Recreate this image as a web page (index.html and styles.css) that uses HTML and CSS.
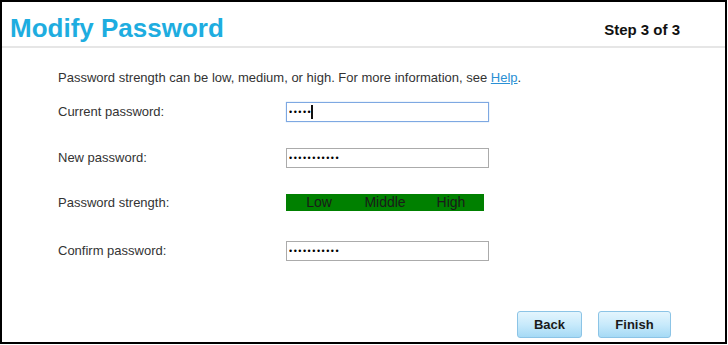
FILE: index.html
```html
<!DOCTYPE html>
<html lang="en">

<head>
    <title>Modify Password</title>
    <link rel="stylesheet" href="styles.css">
</head>

<body>
    <div class="wizard">
        <div class="wizard-header">
            <h1 class="wizard-title">Modify Password</h1>
            <span class="wizard-step">Step 3 of 3</span>
        </div>

        <div class="wizard-body">
            <p class="intro">Password strength can be low, medium, or high. For more information, see <a href="#">Help</a>.</p>

            <div class="form-grid">
                <label class="form-label" for="current">Current password:</label>
                <span class="field is-focused">
                    <input type="password" id="current" class="pwd" value="12345">
                </span>

                <label class="form-label" for="new">New password:</label>
                <span class="field">
                    <input type="password" id="new" class="pwd" value="12345678901">
                </span>

                <span class="form-label">Password strength:</span>
                <div class="strength">
                    <span>Low</span>
                    <span>Middle</span>
                    <span>High</span>
                </div>

                <label class="form-label" for="confirm">Confirm password:</label>
                <span class="field">
                    <input type="password" id="confirm" class="pwd" value="12345678901">
                </span>
            </div>
        </div>

        <div class="wizard-footer">
            <button class="btn btn-back">Back</button>
            <button class="btn btn-finish">Finish</button>
        </div>
    </div>
</body>

</html>
```

FILE: styles.css
```css
body,
html {
    margin: 0;
    padding: 0;
    background-color: white;
    font-family: 'Liberation Sans', Arial, sans-serif;
}

.wizard {
    width: 727px;
    height: 344px;
    box-sizing: border-box;
    border: 2px solid #000;
    display: flex;
    flex-direction: column;
}

.wizard-header {
    height: 44px;
    display: flex;
    align-items: flex-end;
    justify-content: space-between;
    padding: 0 45px 0 8px;
    border-bottom: 2px solid #e6e6e6;
}

.wizard-title {
    margin: 0 0 3px 0;
    font-size: 26px;
    font-weight: bold;
    color: #1eade0;
    line-height: 30px;
}

.wizard-step {
    font-size: 15px;
    font-weight: bold;
    color: #111;
    margin-bottom: 8px;
}

.wizard-body {
    padding: 0 0 0 56px;
    color: #333;
    font-size: 13px;
}

.intro {
    margin: 22px 0 0 0;
    line-height: 15px;
}

.intro a {
    color: #2a8fd4;
}

.form-grid {
    display: grid;
    grid-template-columns: 228px 203px;
    grid-template-rows: 47px 45px 44px 53px;
    align-items: center;
    margin-top: 3px;
}

.field {
    position: relative;
    display: block;
}

.pwd {
    width: 100%;
    height: 20px;
    box-sizing: border-box;
    border: 1px solid #ababab;
    padding: 0 0 0 2px;
    font-family: 'Liberation Sans', Arial, sans-serif;
    font-size: 9px;
    letter-spacing: 1.5px;
    color: #000;
    outline: none;
}

.is-focused .pwd {
    border-color: #7ea8e2;
    box-shadow: 0 0 1px #9cc0ee;
}

/* fake caret, the screenshot has the first field focused */
.is-focused::after {
    content: "";
    position: absolute;
    left: 25px;
    top: 3px;
    width: 2px;
    height: 14px;
    background-color: #111;
}

.strength {
    width: 198px;
    height: 17px;
    background-color: #008000;
    display: grid;
    grid-template-columns: 1fr 1fr 1fr;
    align-items: center;
    text-align: center;
    color: #1a1a1a;
    font-size: 14px;
    line-height: 17px;
}

.wizard-footer {
    margin-top: auto;
    display: flex;
    justify-content: flex-end;
    gap: 16px;
    padding: 0 54px 4px 0;
}

.btn {
    height: 27px;
    box-sizing: border-box;
    border: 1px solid #8cc4e6;
    border-radius: 3px;
    background: linear-gradient(to bottom, #e4f5fd 0%, #c8eafb 50%, #a6daf5 100%);
    font-family: 'Liberation Sans', Arial, sans-serif;
    font-size: 13px;
    font-weight: bold;
    color: #1a1a1a;
    padding: 0;
}

.btn-back {
    width: 65px;
}

.btn-finish {
    width: 73px;
}
```
